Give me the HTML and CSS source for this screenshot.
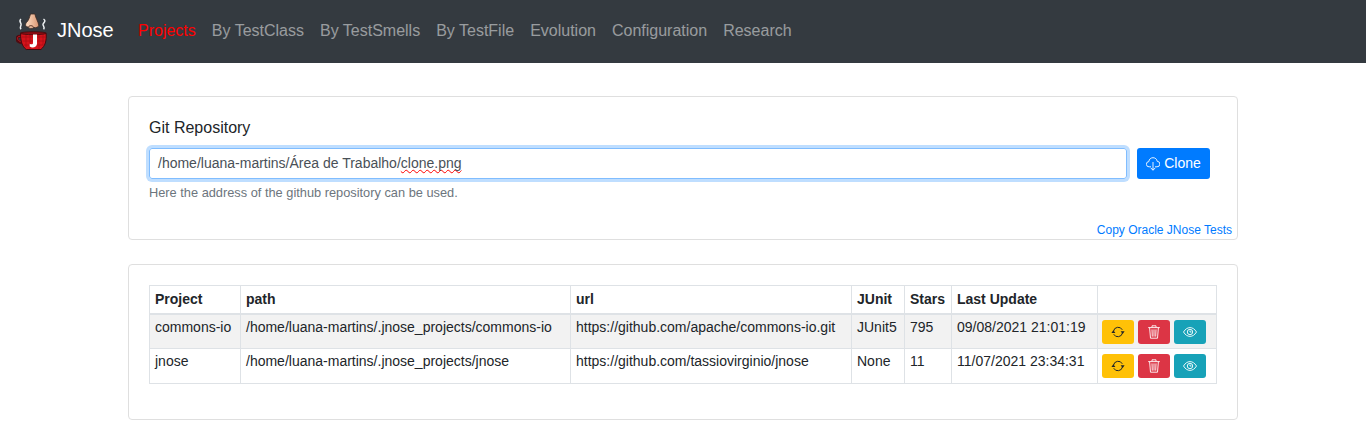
FILE: index.html
```html
<!DOCTYPE html>
<html lang="en">
<head>
<meta charset="utf-8">
<title>JNose</title>
<link rel="stylesheet" href="styles.css">
</head>
<body>
<svg class="sprite" aria-hidden="true">
  <symbol id="sync" viewBox="0 0 14 14"><g fill="none" stroke="currentColor"><path d="M2.5 6.2a4.7 4.7 0 0 1 8.8-1.4M11.5 7.8a4.7 4.7 0 0 1-8.8 1.4"/><path fill="currentColor" stroke="none" d="M.4 7.9 2.3 5.2 4.4 7.9zM9.6 6.3h4L11.7 9z"/></g></symbol>
  <symbol id="trash" viewBox="0 0 14 14"><g fill="none" stroke="currentColor" stroke-width=".9"><path d="M1.2 2.6h11.6M5 2.4V.8h4v1.6M2.6 2.8l.9 10.4h7l.9-10.4M5 4.4l.3 7.2M7 4.4v7.2M9 4.4l-.3 7.2"/></g></symbol>
  <symbol id="eye" viewBox="0 0 14 14"><g fill="none" stroke="currentColor" stroke-width=".9"><path d="M.5 7C2.3 4 4.6 2.6 7 2.6S11.7 4 13.5 7C11.7 10 9.4 11.400 7 11.400S2.300 10 .5 7z"/><circle cx="7" cy="7" r="2.700"/><path d="M7 5.500v1.500h1.500"/></g></symbol>
  <symbol id="cloud" viewBox="0 0 14 14"><g fill="none" stroke="currentColor" stroke-width=".9"><path d="M5 9.800H3.200a2.600 2.600 0 0 1-.4-5.200C3 2.200 4.900.7 7 .7c2.200 0 3.900 1.400 4.200 3.600a2.700 2.700 0 0 1-.2 5.500H9M7 5v8M4.800 10.900 7 13.300l2.200-2.400"/></g></symbol>
</svg>
<nav class="navbar">
  <a class="brand">
    <svg class="logo" viewBox="0 0 32 38">
      <defs><linearGradient id="skin"><stop offset="0" stop-color="#ffdfc5"/><stop offset="1" stop-color="#d99673"/></linearGradient></defs>
      <path d="M14.500 1c-1 3.500-1.800 6.500-4 8.500-1.700 2-.9 4.500 1.500 4.400 1.300 1.800 4.300 2.200 5.800.5 2.200.8 4.800-.2 5-2.200-.7-3.800-3.200-7.200-3.900-11.200z" fill="url(#skin)" stroke="#3b2823" stroke-width=".8"/>
      <path d="M12.500 14c.9-2 4.200-1.600 5.300.4" fill="none" stroke="#51291d"/>
      <path d="M5 6c-3 2.200 1 4 0 6.200-.4 1.300-1.400 2.300 0 4M27.500 6c3 2 .2 3.400-.5 5.200-.5 1.400 2.400 3 .6 5.200" fill="none" stroke="#eceff1" stroke-width="1.500"/>
      <path d="M5 23.500c-5.500-1.500-5.700 5.300.9 6.200" fill="none" stroke="#500b10" stroke-width="3"/>
      <path d="M5 23.500c-5-1-4.700 4.500.9 5.500" fill="none" stroke="#bd1720"/>
      <path d="M4.600 20.200h25.500c.7 8-1.100 12.800-5.200 16.300H10.200C6.200 33.500 4.400 28 4.600 20.200z" fill="#d6131b" stroke="#430a0e"/>
      <path d="M6 24h23M6.500 28h22M8 32h19M10 21v13M14 21v15M23 21v15M27 21v11" stroke="#a90c14" stroke-width=".8"/>
      <ellipse cx="17.300" cy="20.200" rx="12.800" ry="1.500" fill="#8d0c13" stroke="#460a0d" stroke-width=".8"/>
      <path d="M17 21.500h4v9.200c0 3.500-4.800 4.700-7.300 2.800v-2.800c1.800 1 3.300.7 3.300-1z" fill="#fff"/>
    </svg>
    <span>JNose</span>
  </a>
  <div class="links"><a class="active">Projects</a><a>By TestClass</a><a>By TestSmells</a><a>By TestFile</a><a>Evolution</a><a>Configuration</a><a>Research</a></div>
</nav>
<main class="container">
  <section class="card repo">
    <label>Git Repository</label>
    <div class="form-row">
      <div class="input">/home/luana-martins/Área de Trabalho/<span class="misspelled">clone.png</span></div>
      <button class="btn clone"><svg class="icon"><use href="#cloud"/></svg><span>Clone</span></button>
    </div>
    <small class="help">Here the address of the github repository can be used.</small>
    <a class="copy">Copy Oracle JNose Tests</a>
  </section>
  <section class="card projects">
    <table>
      <colgroup><col class="c-project"><col class="c-path"><col class="c-url"><col class="c-junit"><col class="c-stars"><col class="c-update"><col class="c-actions"></colgroup>
      <thead><tr><th>Project</th><th>path</th><th>url</th><th>JUnit</th><th>Stars</th><th>Last Update</th><th></th></tr></thead>
      <tbody>
        <tr><td>commons-io</td><td>/home/luana-martins/.jnose_projects/commons-io</td><td>https://github.com/apache/commons-io.git</td><td>JUnit5</td><td>795</td><td>09/08/2021 21:01:19</td><td><div class="actions"><button class="btn warning"><svg class="icon"><use href="#sync"/></svg></button><button class="btn danger"><svg class="icon"><use href="#trash"/></svg></button><button class="btn info"><svg class="icon"><use href="#eye"/></svg></button></div></td></tr>
        <tr><td>jnose</td><td>/home/luana-martins/.jnose_projects/jnose</td><td>https://github.com/tassiovirginio/jnose</td><td>None</td><td>11</td><td>11/07/2021 23:34:31</td><td><div class="actions"><button class="btn warning"><svg class="icon"><use href="#sync"/></svg></button><button class="btn danger"><svg class="icon"><use href="#trash"/></svg></button><button class="btn info"><svg class="icon"><use href="#eye"/></svg></button></div></td></tr>
      </tbody>
    </table>
  </section>
</main>
</body>
</html>
```
FILE: styles.css
```css
* { box-sizing: border-box; }
body { margin: 0; background: #fff; color: #212529; font: 16px/1.5 "Liberation Sans", Arial, sans-serif; }
.sprite { display: none; }
.navbar { display: flex; align-items: center; height: 63px; padding: 0 16px; background: #343a40; }
.brand { display: flex; align-items: center; width: 98px; margin-right: 16px; gap: 9px; color: #fff; font-size: 20px; line-height: 30px; }
.brand span { margin-top: -3px; }
.logo { width: 32px; height: 38px; flex: none; }
.links { display: flex; margin-top: -2px; }
.links a { padding: 8px; color: rgba(255, 255, 255, .5); white-space: nowrap; }
.links .active { color: #f00; }
.container { width: 1110px; margin: 33px auto 0; display: flex; flex-direction: column; gap: 24px; }
.card { border: 1px solid #dfdfdf; border-radius: 4px; padding: 20px; }
.repo { height: 144px; display: flex; flex-direction: column; padding: 20px 5px 0 20px; }
.repo label { line-height: 24px; margin-bottom: 8px; margin-top: -1px; }
.form-row { display: flex; gap: 10px; margin-right: 22px; }
.input { flex: 1; height: 31px; padding: 4px 8px; border: 1px solid #80bdff; border-radius: 3px; box-shadow: 0 0 0 3px #bfdeff; color: #495057; font-size: 14px; line-height: 21px; }
.misspelled { text-decoration: underline wavy #f00 1px; text-decoration-skip-ink: none; text-underline-offset: 1px; }
.btn { display: flex; align-items: center; justify-content: center; border: 0; border-radius: 3px; padding: 0; color: #fff; font: inherit; font-size: 14px; }
.clone { width: 73px; height: 31px; background: #007bff; gap: 4px; }
.icon { width: 14px; height: 14px; flex: none; }
.help { margin-top: 4px; font-size: 12.8px; line-height: 19px; color: #6c757d; }
.copy { align-self: flex-end; margin-top: auto; font-size: 12px; line-height: 18px; color: #007bff; }
.projects { height: 156px; }
table { width: 1068px; table-layout: fixed; border-collapse: collapse; font-size: 14px; line-height: 21px; }
th, td { padding: 0 5px; border: 1px solid #dee2e6; text-align: left; vertical-align: top; white-space: nowrap; }
th { height: 28px; padding-top: 3px; border-bottom-width: 2px; }
td { height: 35px; padding-top: 2px; }
tbody tr:first-child { background: #f2f2f2; }
.c-project { width: 91px; }
.c-path { width: 330px; }
.c-url { width: 281px; }
.c-junit { width: 53px; }
.c-stars { width: 47px; }
.c-update { width: 146px; }
.c-actions { width: 119px; }
.actions { display: flex; gap: 4px; margin: 3px 0 0 -1px; }
.actions .btn { width: 32px; height: 24px; }
.warning { background: #ffc107; color: #212529; }
.danger { background: #dc3545; }
.info { background: #17a2b8; }
```
